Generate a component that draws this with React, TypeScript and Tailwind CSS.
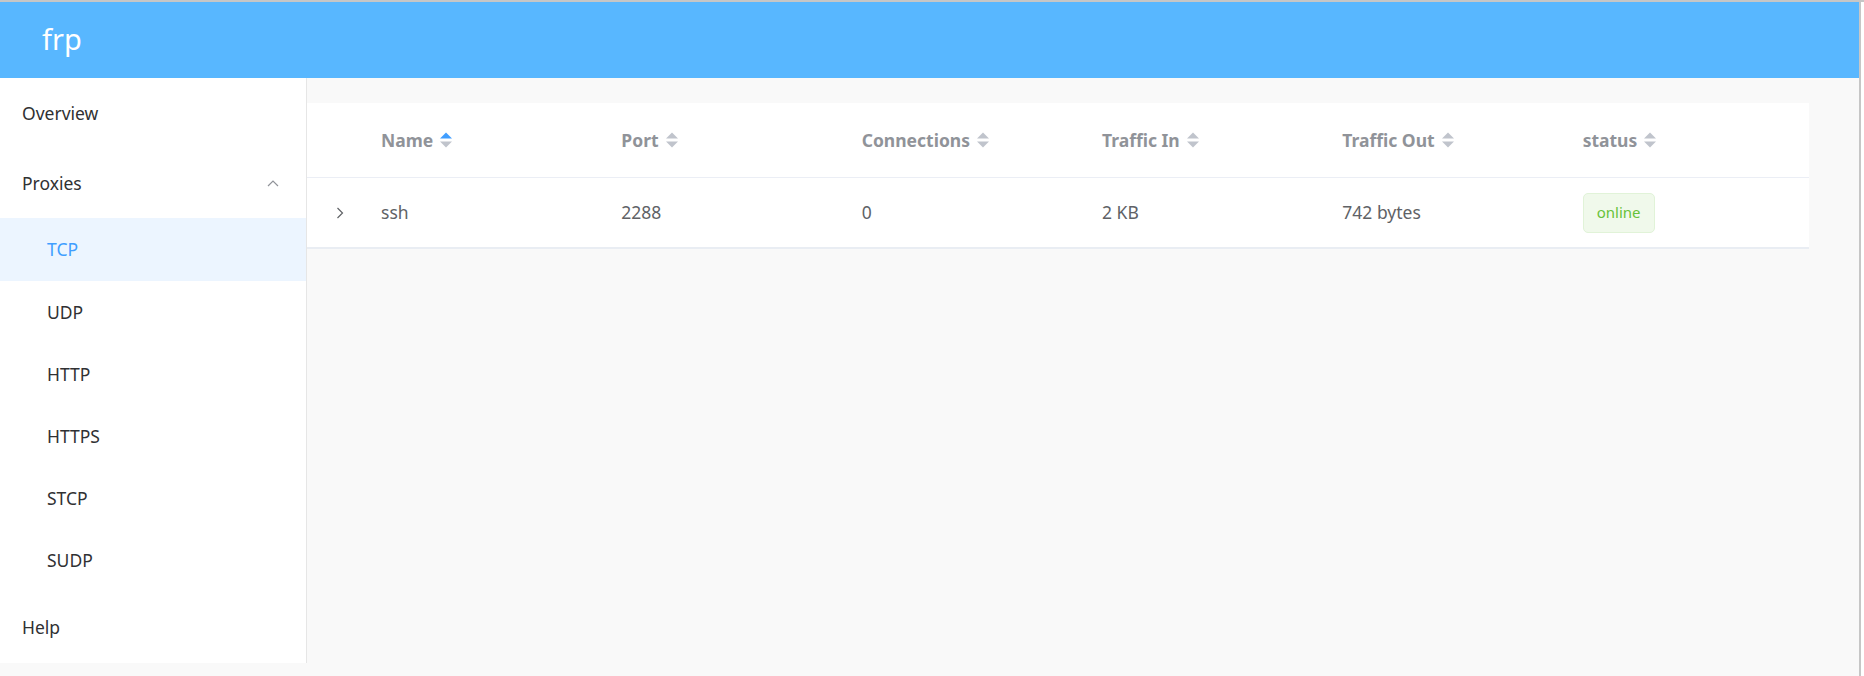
import React from 'react';

const subItems = ['TCP', 'UDP', 'HTTP', 'HTTPS', 'STCP', 'SUDP'];

const columns = [
  { key: 'name', label: 'Name', active: true },
  { key: 'port', label: 'Port' },
  { key: 'conns', label: 'Connections' },
  { key: 'in', label: 'Traffic In' },
  { key: 'out', label: 'Traffic Out' },
  { key: 'status', label: 'status' },
];

function SortCaret({ active }: { active?: boolean }) {
  return (
    <svg width="12" height="18" viewBox="0 0 12 18" className="ml-[7px] shrink-0">
      <polygon points="0,7.5 6,1.5 12,7.5" fill={active ? '#409eff' : '#c0c4cc'} />
      <polygon points="0,10.5 6,16.5 12,10.5" fill="#c0c4cc" />
    </svg>
  );
}

function Sidebar() {
  return (
    <div className="w-[307px] h-[585px] shrink-0 bg-white border-r border-[#e6e6e6] text-[17.5px] text-[#303133]">
      <div className="h-[70px] pl-[22px] flex items-center">Overview</div>
      <div className="h-[70px] pl-[22px] pr-[27px] flex items-center justify-between">
        <span>Proxies</span>
        <svg width="12" height="8" viewBox="0 0 12 8">
          <polyline points="1,7 6,2 11,7" fill="none" stroke="#909399" strokeWidth="1.2" />
        </svg>
      </div>
      {subItems.map((s, i) => (
        <div
          key={s}
          className={
            i === 0
              ? 'h-[63px] pl-[47px] flex items-center bg-[#ecf5ff] text-[#409eff]'
              : 'h-[62px] pl-[47px] flex items-center'
          }
        >
          {s}
        </div>
      ))}
      <div className="h-[72px] pl-[22px] flex items-center">Help</div>
    </div>
  );
}

function ProxyTable() {
  return (
    <div className="w-[1502px] bg-white">
      <div className="grid grid-cols-[60px_repeat(6,1fr)] h-[75px] border-b border-[#ebeef5] items-center">
        <div />
        {columns.map((c) => (
          <div key={c.key} className="pl-[14px] flex items-center font-bold text-[#909399] text-[17.5px]">
            <span>{c.label}</span>
            <SortCaret active={c.active} />
          </div>
        ))}
      </div>
      <div className="grid grid-cols-[60px_repeat(6,1fr)] h-[71px] border-b-2 border-[#e9edf3] items-center text-[17.5px] text-[#606266]">
        <div className="pl-[29px] flex items-center">
          <svg width="8" height="12" viewBox="0 0 8 12">
            <polyline points="1.5,1 6.5,6 1.5,11" fill="none" stroke="#606266" strokeWidth="1.2" />
          </svg>
        </div>
        <div className="pl-[14px]">ssh</div>
        <div className="pl-[14px]">2288</div>
        <div className="pl-[14px]">0</div>
        <div className="pl-[14px]">2 KB</div>
        <div className="pl-[14px]">742 bytes</div>
        <div className="pl-[14px]">
          <span className="inline-flex items-center justify-center w-[72px] h-[40px] rounded-[5px] bg-[#f0f9eb] border border-[#e1f3d8] text-[#67c23a] text-[15px]">
            online
          </span>
        </div>
      </div>
    </div>
  );
}

export default function App() {
  return (
    <div className="w-[1864px] h-[676px] bg-white border-t-2 border-[#c6c6c6] overflow-hidden font-['Noto_Sans','Liberation_Sans',sans-serif]">
      <div className="w-[1861px] h-full border-r-2 border-[#c6c6c6] flex flex-col">
        <div className="h-[76px] shrink-0 bg-[#58b7ff] pl-[42px] flex items-center text-white text-[29px] leading-none pb-[4px]">
          frp
        </div>
        <div className="flex flex-1 bg-[#f9f9f9]">
          <Sidebar />
          <div className="flex-1 pt-[25px]">
            <ProxyTable />
          </div>
        </div>
      </div>
    </div>
  );
}
